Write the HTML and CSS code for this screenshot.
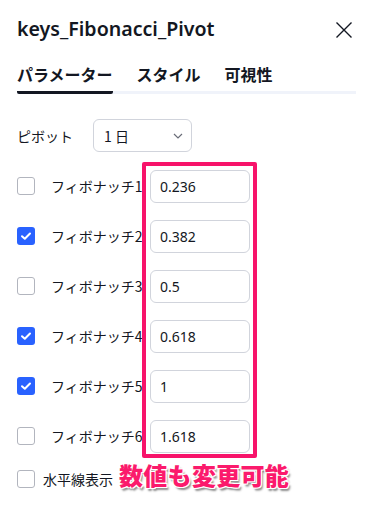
FILE: index.html
```html
<!DOCTYPE html>
<html lang="ja">
<head>
<meta charset="utf-8">
<link rel="stylesheet" href="styles.css">
</head>
<body>
<div class="panel">
  <div class="header">
    <div class="title">keys_Fibonacci_Pivot</div>
    <svg class="close" width="18" height="18" viewBox="0 0 18 18"><path d="M1.5 1.5L16.5 16.5M16.5 1.5L1.5 16.5" stroke="#131722" stroke-width="1.4" fill="none"/></svg>
  </div>
  <div class="tabs">
    <div class="tab active">パラメーター</div>
    <div class="tab">スタイル</div>
    <div class="tab">可視性</div>
  </div>
  <div class="pivot">
    <span class="plabel">ピボット</span>
    <div class="select">
      <span>1 日</span>
      <svg width="10" height="6" viewBox="0 0 10 6"><path d="M1 1L5 5L9 1" stroke="#6a6d78" stroke-width="1.2" fill="none"/></svg>
    </div>
  </div>
  <div class="rows">
    <div class="row"><span class="cb"></span><span class="lbl">フィボナッチ1</span><span class="inp">0.236</span></div>
    <div class="row"><span class="cb on"><svg width="18" height="18" viewBox="0 0 18 18"><path d="M5 9.2L7.8 11.8L13 6.5" stroke="#fff" stroke-width="2" fill="none" stroke-linecap="round" stroke-linejoin="round"/></svg></span><span class="lbl">フィボナッチ2</span><span class="inp">0.382</span></div>
    <div class="row"><span class="cb"></span><span class="lbl">フィボナッチ3</span><span class="inp">0.5</span></div>
    <div class="row"><span class="cb on"><svg width="18" height="18" viewBox="0 0 18 18"><path d="M5 9.2L7.8 11.8L13 6.5" stroke="#fff" stroke-width="2" fill="none" stroke-linecap="round" stroke-linejoin="round"/></svg></span><span class="lbl">フィボナッチ4</span><span class="inp">0.618</span></div>
    <div class="row"><span class="cb on"><svg width="18" height="18" viewBox="0 0 18 18"><path d="M5 9.2L7.8 11.8L13 6.5" stroke="#fff" stroke-width="2" fill="none" stroke-linecap="round" stroke-linejoin="round"/></svg></span><span class="lbl">フィボナッチ5</span><span class="inp">1</span></div>
    <div class="row"><span class="cb"></span><span class="lbl">フィボナッチ6</span><span class="inp">1.618</span></div>
    <div class="row last"><span class="cb"></span><span class="lbl2">水平線表示</span></div>
  </div>
  <div class="highlight"></div>
  <div class="note">数値も変更可能</div>
</div>
</body>
</html>
```

FILE: styles.css
```css
html, body {
  margin: 0;
  padding: 0;
  background: #fff;
}
body {
  font-family: "Noto Sans", "Noto Sans CJK JP", sans-serif;
  color: #131722;
  width: 372px;
  height: 512px;
  overflow: hidden;
}
.panel {
  position: relative;
  width: 372px;
  height: 512px;
}
.header {
  display: flex;
  justify-content: space-between;
  align-items: center;
  padding: 16px 19px 0 17px;
  height: 26px;
}
.title {
  font-size: 19.6px;
  font-weight: 600;
  line-height: 26px;
}
.close {
  margin-top: 2px;
}
.tabs {
  display: flex;
  gap: 24px;
  margin: 22px 16px 0 17px;
  border-bottom: 3px solid #f0f3fa;
}
.tab {
  font-family: "Noto Sans CJK JP", sans-serif;
  font-size: 16px;
  font-weight: 700;
  line-height: 20px;
  padding-bottom: 7px;
}
.tab.active {
  border-bottom: 3px solid #131722;
  border-radius: 2px;
  margin-bottom: -3px;
}
.pivot {
  display: flex;
  align-items: center;
  margin-top: 25px;
  padding-left: 17px;
  height: 33px;
}
.plabel {
  font-family: "Noto Sans CJK JP", sans-serif;
  font-size: 14px;
  width: 56px;
  color: #131722;
}
.select {
  margin-left: 20px;
  width: 99px;
  height: 33px;
  box-sizing: border-box;
  border: 1px solid #d1d4dc;
  border-radius: 6px;
  display: flex;
  align-items: center;
  justify-content: space-between;
  padding: 0 8px 0 10px;
  font-family: "Noto Sans CJK JP", sans-serif;
  font-size: 14px;
}
.rows {
  margin-top: 9px;
}
.row {
  display: flex;
  align-items: center;
  height: 50px;
  padding-left: 17px;
}
.row.last {
  height: 36px;
}
.cb {
  flex: none;
  width: 18px;
  height: 18px;
  box-sizing: border-box;
  border: 1px solid #b2b5be;
  border-radius: 3px;
  display: flex;
}
.cb.on {
  background: #2962ff;
  border: none;
}
.lbl {
  font-family: "Noto Sans CJK JP", sans-serif;
  font-size: 14px;
  margin-left: 16px;
  width: 99px;
  flex: none;
  white-space: nowrap;
  overflow: hidden;
}
.lbl2 {
  font-family: "Noto Sans CJK JP", sans-serif;
  font-size: 14px;
  margin-left: 8px;
}
.inp {
  flex: none;
  width: 100px;
  height: 33px;
  box-sizing: border-box;
  border: 1px solid #d1d4dc;
  border-radius: 6px;
  display: flex;
  align-items: center;
  padding-left: 9px;
  font-size: 14px;
  background: #fff;
}
.highlight {
  position: absolute;
  left: 142px;
  top: 162px;
  width: 115px;
  height: 296px;
  box-sizing: border-box;
  border: 4px solid #f7136a;
  border-radius: 2px;
}
.note {
  position: absolute;
  left: 119px;
  top: 461px;
  font-family: "Noto Sans CJK JP", sans-serif;
  font-size: 24px;
  font-weight: 900;
  line-height: 28px;
  letter-spacing: 0.3px;
  color: #fb1a6c;
  text-shadow: -1px -1px 0 #fff, 1px -1px 0 #fff, -1px 1px 0 #fff, 1px 1px 0 #fff, 2px 3px 2px rgba(0,0,0,0.45);
}
```
